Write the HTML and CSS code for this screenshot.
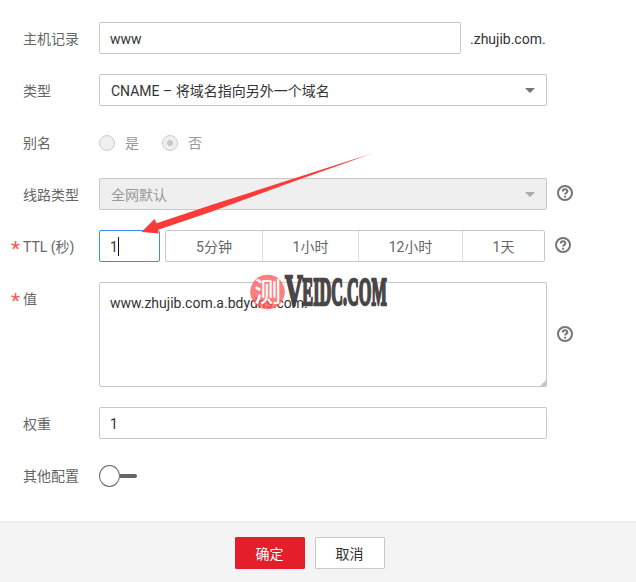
FILE: index.html
```html
<!DOCTYPE html>
<html lang="zh-CN">
<head>
<meta charset="utf-8">
<title>域名解析</title>
<link rel="stylesheet" href="styles.css">
</head>
<body>
<form class="form">
  <div class="row"><span class="label">主机记录</span><div class="box host">www</div><span class="suffix">.zhujib.com.</span></div>
  <div class="row"><span class="label">类型</span><div class="box select"><span>CNAME – 将域名指向另外一个域名</span><i class="caret"></i></div></div>
  <div class="row"><span class="label">别名</span><span class="radio"></span><span class="radio-text first">是</span><span class="radio checked"></span><span class="radio-text">否</span></div>
  <div class="row"><span class="label">线路类型</span><div class="box select disabled"><span>全网默认</span><i class="caret"></i></div>
    <svg class="help" viewBox="0 0 16 16"><circle cx="8" cy="8" r="7"/><path d="M5.700 6.500C5.700 3.400 10.400 3.500 10.400 6.300C10.400 7.800 8.100 7.900 8.100 9.500"/><path d="M8.100 10.800v1.800"/></svg></div>
  <div class="row"><span class="label required">TTL (秒)</span><div class="box ttl">1<i class="cursor"></i></div>
    <div class="segments"><span>5分钟</span><span>1小时</span><span>12小时</span><span>1天</span></div>
    <svg class="help" viewBox="0 0 16 16"><circle cx="8" cy="8" r="7"/><path d="M5.700 6.500C5.700 3.400 10.400 3.500 10.400 6.300C10.400 7.800 8.100 7.900 8.100 9.500"/><path d="M8.100 10.800v1.800"/></svg></div>
  <div class="row tall"><span class="label required">值</span><div class="box area">www.zhujib.com.a.bdydns.com.<i class="grip"></i></div>
    <svg class="help" viewBox="0 0 16 16"><circle cx="8" cy="8" r="7"/><path d="M5.700 6.500C5.700 3.400 10.400 3.500 10.400 6.300C10.400 7.800 8.100 7.900 8.100 9.500"/><path d="M8.100 10.800v1.800"/></svg></div>
  <div class="row"><span class="label">权重</span><div class="box">1</div></div>
  <div class="row"><span class="label">其他配置</span><span class="toggle"></span></div>
</form>
<footer class="footer"><button class="btn primary">确定</button><button class="btn">取消</button></footer>
<svg class="overlay" viewBox="0 0 636 582">
  <defs><linearGradient id="fade" gradientUnits="userSpaceOnUse" x1="350" y1="162" x2="380" y2="151"><stop offset="0" stop-color="#fb3b38"/><stop offset="1" stop-color="#fb3b38" stop-opacity=".1"/></linearGradient></defs>
  <path fill="url(#fade)" d="M141.500 232L154.500 219L156.500 223.300L212 204.700L290 179.800L378 151.500L290 182.800L212 211.500L157.500 230L159 233.600Z"/>
  <circle class="seal" cx="267.500" cy="292" r="17.300"/>
  <text class="seal-text" x="254" y="302" textLength="27">测</text>
  <g transform="translate(285 305) scale(.48 1)"><text class="brand initial" x="0" y="0" textLength="37" lengthAdjust="spacingAndGlyphs">V</text><text class="brand" x="36" y="0" textLength="176" lengthAdjust="spacingAndGlyphs">EIDC.COM</text></g>
</svg>
</body>
</html>
```
FILE: styles.css
```css
* { box-sizing: border-box; }
body {
  margin: 0;
  width: 636px;
  height: 582px;
  overflow: hidden;
  display: flex;
  flex-direction: column;
  position: relative;
  background: #fff;
  color: #333;
  font: 14px/20px Roboto, "Noto Sans CJK SC", sans-serif;
}
.form { display: flex; flex-direction: column; gap: 20px; height: 521px; padding: 22px 0 0 23px; }
.row { display: flex; align-items: center; height: 32px; flex: none; }
.tall { height: 105px; }
.label { position: relative; width: 76px; flex: none; color: #666; padding-top: 1px; }
.tall .label { align-self: flex-start; padding-top: 7px; }
.required::before { content: "*"; position: absolute; left: -12px; margin-top: 2px; color: #f55b55; font-size: 21px; }
.box { position: relative; width: 448px; height: 32px; flex: none; border: 1px solid #c8c8c8; border-radius: 2px; padding: 6px 10px 4px; background: #fff; white-space: nowrap; }
.host { width: 362px; }
.suffix { margin-left: 9px; padding-top: 1px; }
.select { display: flex; align-items: center; justify-content: space-between; padding: 1px 11px 0; }
.caret { width: 10px; height: 5px; background: #757575; clip-path: polygon(0 0, 100% 0, 50% 100%); }
.disabled { background: #efefef; color: #999; }
.disabled .caret { background: #aaa; }
.radio { width: 16px; height: 16px; margin-top: 1px; border: 1px solid #ccc; border-radius: 50%; background: #efefef; }
.checked { background: radial-gradient(circle, #c8c8c8 0 2.600px, #efefef 3.400px); }
.radio-text { margin-left: 10px; padding-top: 1px; color: #999; }
.first { margin-right: 23px; }
.help { width: 16px; height: 16px; margin: -2px 0 0 10px; fill: none; stroke: #757575; stroke-width: 2; }
.ttl { width: 61px; border-color: #3591f7; }
.cursor { position: absolute; left: 18px; top: 6px; width: 1px; height: 19px; background: #111; }
.segments { display: grid; grid-template-columns: 97px 96px 104px 81px; width: 380px; height: 32px; margin-left: 5px; border: 1px solid #c8c8c8; border-radius: 2px; color: #666; }
.segments span { display: grid; place-items: center; padding-top: 1px; border-right: 1px solid #e0e0e0; }
.segments span:last-child { border-right: 0; }
.area { height: 105px; padding-top: 10px; }
.tall .help { margin-top: -1px; }
.grip { position: absolute; right: 0; bottom: 0; width: 6px; height: 6px; background: #c8c8c8; clip-path: polygon(100% 0, 100% 100%, 0 100%); }
.toggle { display: flex; align-items: center; width: 38px; margin-top: 2px; }
.toggle::before { content: ""; width: 20px; height: 20px; border: 1px solid #666; border-radius: 50%; }
.toggle::after { content: ""; width: 18px; height: 4px; background: #666; border-radius: 0 2px 2px 0; }
.footer { height: 61px; background: #f4f4f4; border-top: 1px solid #e9e9e9; display: flex; gap: 10px; padding: 15px 0 0 235px; }
.btn { width: 70px; height: 32px; padding: 1px 1px 0 0; border: 1px solid #c8c8c8; border-radius: 1px; background: #fff; color: #333; font: inherit; }
.primary { background: #e51e2b; border-color: #e51e2b; color: #fff; }
.overlay { position: absolute; left: 0; top: 0; width: 636px; height: 582px; pointer-events: none; }
.seal { fill: #ff5555; opacity: .76; }
.seal-text { fill: #fff; font: 500 27px "Noto Sans CJK SC", sans-serif; }
.brand { fill: #3d3739; stroke: #3d3739; stroke-width: 2.4; font: bold 39px "Liberation Serif", serif; opacity: .93; }
.initial { font-size: 44px; }
```
